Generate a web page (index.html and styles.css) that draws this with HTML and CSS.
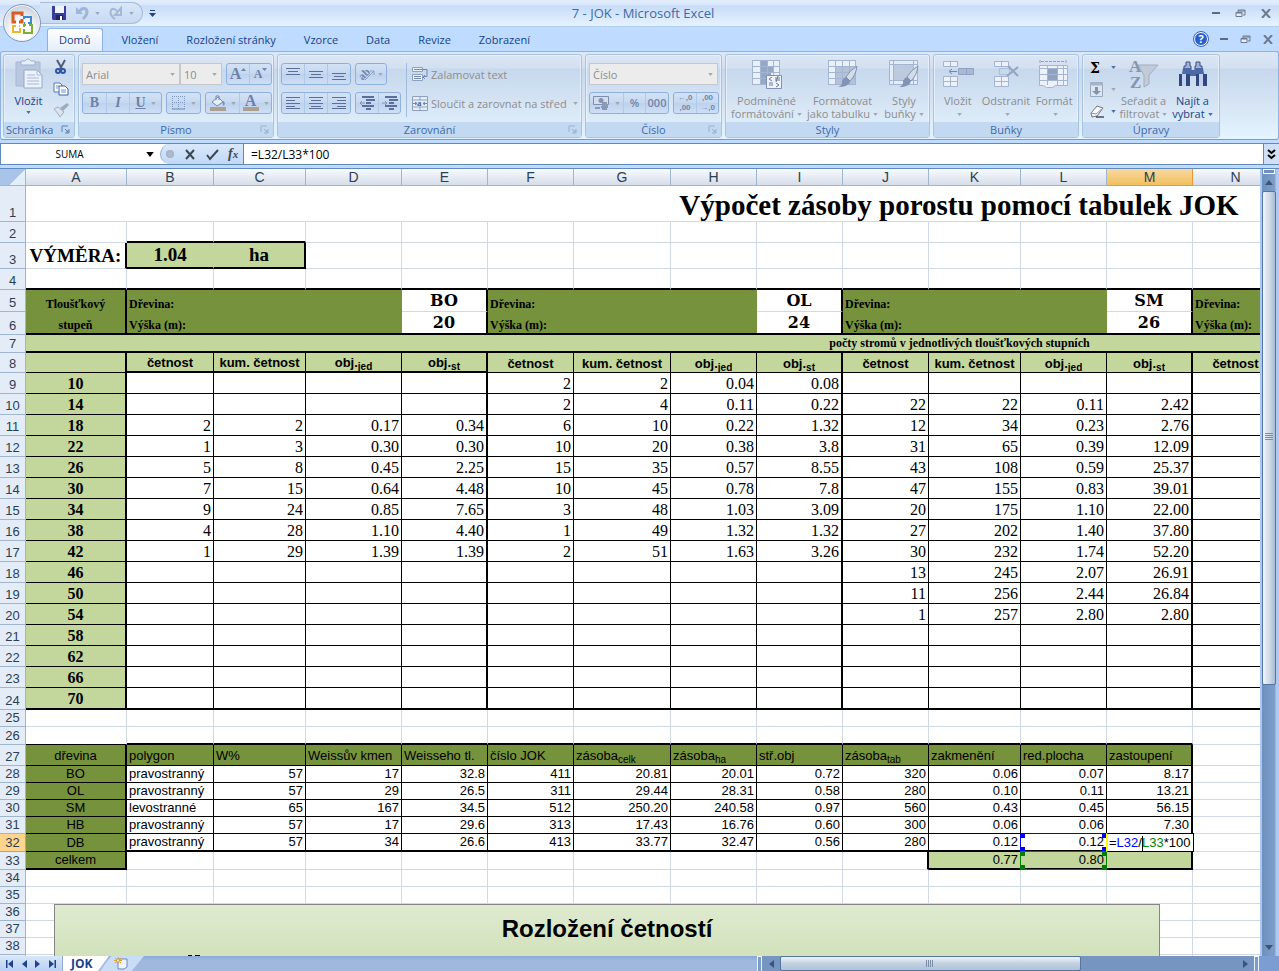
FILE: index.html
```html
<!DOCTYPE html>
<html lang="cs">
<head>
<meta charset="utf-8">
<title>7 - JOK - Microsoft Excel</title>
<link rel="stylesheet" href="styles.css">
</head>
<body>
<svg class="defs" aria-hidden="true">
  <symbol id="down" viewBox="0 0 6 4"><path d="M0 0h6L3 4z" fill="currentColor"/></symbol>
  <symbol id="launch" viewBox="0 0 9 9"><path d="M1 7V1h6M8 4v4H4M4 4l3 3M7 5v2H5" fill="none" stroke="currentColor"/></symbol>
  <symbol id="restore" viewBox="0 0 11 9"><path d="M3 3V1h7v5H8M3 2h7" fill="none" stroke="#6c7a8c"/><path d="M1 3.500h6v4H1z" fill="#e4eefc" stroke="#6c7a8c"/><path d="M1 4h6" stroke="#6c7a8c"/></symbol>
  <symbol id="close" viewBox="0 0 10 9"><path d="M1 0l8 9M9 0L1 9" stroke="#6c7a8c" stroke-width="2"/></symbol>
  <symbol id="min" viewBox="0 0 8 3"><path d="M0 1h8" stroke="#5d6b7c" stroke-width="2"/></symbol>
  <symbol id="brush" viewBox="0 0 20 22"><path d="M19 0q-7 4-11 11l4 4q6-6 7-15z" fill="#d3dce9" stroke="#7f93b4"/><path d="M8 11l4 4q-1 6-12 6 5-2 4-6 1-3 4-4z" fill="#8193b6"/></symbol>
</svg>

<header class="titlebar">
  <div class="quick">
    <button class="flat" aria-label="Uložit"><svg width="14" height="14" viewBox="0 0 14 14"><path d="M0 0h14v14H1l-1-1z" fill="#3a3c9c"/><path d="M3 0h9v7H3z" fill="#eef2fb"/><path d="M4 9h7v5H4z" fill="#20245f"/><path d="M8 10h2v4H8z" fill="#fff"/></svg></button>
    <button class="flat" aria-label="Zpět"><svg width="13" height="13" viewBox="0 0 13 13"><path d="M1 0v7h7z" fill="#9cb6dc"/><path d="M4 5q3-5 7-3 3 4-3 10" fill="none" stroke="#9cb6dc" stroke-width="3"/></svg></button>
    <svg class="arrow pale"><use href="#down"/></svg>
    <button class="flat redo" aria-label="Znovu"><svg width="13" height="13" viewBox="0 0 13 13"><path d="M12 1v7H6zM9 5Q5 0 2 3q-2 5 4 9" fill="none" stroke="#a5b9d6" stroke-width="2"/></svg></button>
    <svg class="arrow pale"><use href="#down"/></svg>
  </div>
  <button class="flat more" aria-label="Přizpůsobit"><svg width="7" height="7" viewBox="0 0 7 7"><path d="M1 0h5v1H1zM0 3h7L3.500 7z" fill="#1e4485"/></svg></button>
  <h1>7 - JOK - Microsoft Excel</h1>
  <div class="winbtns">
    <button class="flat" aria-label="Minimalizovat"><svg width="8" height="3"><use href="#min"/></svg></button>
    <button class="flat" aria-label="Obnovit"><svg width="11" height="9"><use href="#restore"/></svg></button>
    <button class="flat" aria-label="Zavřít"><svg width="10" height="9"><use href="#close"/></svg></button>
  </div>
  <button class="office" aria-label="Tlačítko Office"><svg width="24" height="24" viewBox="0 0 24 24" fill="none"><path d="M6 11H3V2h9v3M12 8v3H9" stroke="#dc5a1f" stroke-width="3"/><path d="M14 8V6h7v6h-3M15 12h-1" stroke="#3f86cf" stroke-width="2"/><path d="M10 17v4H3v-6h3M9 15h1" stroke="#f0b52a" stroke-width="2"/><path d="M14 18v4h8v-8h-3M16 14h-2v2" stroke="#7fae37" stroke-width="2"/></svg></button>
</header>

<nav class="tabs">
  <a href="#" class="on">Domů</a><a href="#">Vložení</a><a href="#">Rozložení stránky</a><a href="#">Vzorce</a><a href="#">Data</a><a href="#">Revize</a><a href="#">Zobrazení</a>
  <div class="winbtns">
    <button class="help" aria-label="Nápověda">?</button>
    <button class="flat" aria-label="Minimalizovat okno"><svg width="8" height="3"><use href="#min"/></svg></button>
    <button class="flat" aria-label="Obnovit okno"><svg width="11" height="9"><use href="#restore"/></svg></button>
    <button class="flat" aria-label="Zavřít okno"><svg width="10" height="9"><use href="#close"/></svg></button>
  </div>
</nav>

<div class="ribbon">
  <section class="group g-clip">
    <div class="body">
      <button class="big live"><svg width="28" height="32" viewBox="0 0 28 32"><path d="M1 4h24v24H1z" fill="#b9c8e0" stroke="#a7b8d3"/><path d="M6 3h4q3-4 6 0h4v4H6z" fill="#e8eef8" stroke="#9fb1cf"/><path d="M9 12h13l5 5v13H9z" fill="#edf3fc" stroke="#94a9cc"/><path d="M22 12v5h5M12 17h8M12 20h12M12 23h12M12 26h12" fill="none" stroke="#a3b7d8"/></svg><span>Vložit</span><svg class="arrow"><use href="#down"/></svg></button>
      <div class="stack">
        <button class="flat" aria-label="Vyjmout"><svg width="12" height="15" viewBox="0 0 12 15"><path d="M2 0l5 9M10 0L5 9" stroke="#4b5f80" stroke-width="2"/><circle cx="3" cy="11" r="2" fill="none" stroke="#2d56a5" stroke-width="2"/><circle cx="8" cy="11" r="2" fill="none" stroke="#2d56a5" stroke-width="2"/></svg></button>
        <button class="flat" aria-label="Kopírovat"><svg width="16" height="14" viewBox="0 0 16 14"><path d="M1 1h6l2 2v7H1z" fill="#fff" stroke="#5578b8"/><path d="M6 4h6l3 3v6H6z" fill="#fff" stroke="#3f63a8"/><path d="M8 8h5M8 10h5M3 4h3M3 6h2" stroke="#6f8fca"/></svg></button>
        <button class="flat" aria-label="Kopírovat formát"><svg width="16" height="14" viewBox="0 0 16 14"><path d="M14 0l2 2-6 6-3-3z" fill="#99abc6"/><path d="M1 6l4-2 6 5-4 5q-2-4-6-8z" fill="#dbe3ef" stroke="#a2aec2"/></svg></button>
      </div>
    </div>
    <h2>Schránka<svg class="launch dark"><use href="#launch"/></svg></h2>
  </section>

  <section class="group g-font">
    <div class="body rows">
      <div class="row">
        <div class="combos"><label class="combo font"><select aria-label="Písmo"><option>Arial</option></select><svg class="arrow gray"><use href="#down"/></svg></label><label class="combo size"><select aria-label="Velikost písma"><option>10</option></select><svg class="arrow gray"><use href="#down"/></svg></label></div>
        <div class="seg"><button class="ltr grow-a" aria-label="Zvětšit písmo">A<svg width="5" height="3" viewBox="0 0 5 3"><path d="M0 3h5L2.500 0z" fill="#7085a8"/></svg></button><button class="ltr grow-a small" aria-label="Zmenšit písmo">A<svg width="5" height="3" viewBox="0 0 5 3"><path d="M0 0h5L2.500 3z" fill="#7085a8"/></svg></button></div>
      </div>
      <div class="row">
        <div class="seg"><button class="ltr fmt">B</button><button class="ltr fmt"><i>I</i></button><button class="ltr wide"><u>U</u><svg class="arrow gray"><use href="#down"/></svg></button></div>
        <div class="seg"><button class="bord" aria-label="Ohraničení"><svg width="14" height="14" viewBox="0 0 14 14"><path d="M.5 0v13M6.500 0v13M12.500 0v13M0 .5h13M0 6.500h13" stroke="#8299bf" stroke-dasharray="1 1"/><path d="M0 13h13" stroke="#6e88b3"/></svg><svg class="arrow gray"><use href="#down"/></svg></button></div>
        <div class="seg"><button class="bord" aria-label="Barva výplně"><svg width="16" height="16" viewBox="0 0 16 16"><path d="M2 7l6-5 5 5-6 4zM6 5V1h3v4" fill="#e6edf7" stroke="#7489b1"/><path d="M13 6q3 1 1 5-2-1-1-5z" fill="#7d90b3"/><path d="M0 12h16v4H0z" fill="#ab9f8f"/></svg><svg class="arrow gray"><use href="#down"/></svg></button><button class="ltr under" aria-label="Barva písma"><b>A</b><svg class="arrow gray"><use href="#down"/></svg></button></div>
      </div>
    </div>
    <h2>Písmo<svg class="launch"><use href="#launch"/></svg></h2>
  </section>

  <section class="group g-align">
    <div class="body split">
      <div class="rows">
        <div class="row">
          <div class="seg three"><button aria-label="Nahoru"><svg width="14" height="12" viewBox="0 0 14 12"><path d="M0 .5h14M2 3.500h10M0 6.500h14" stroke="#5c6f9b"/></svg></button><button aria-label="Na střed svisle"><svg width="14" height="12" viewBox="0 0 14 12"><path d="M0 3.500h14M2 6.500h10M0 9.500h14" stroke="#5c6f9b"/></svg></button><button aria-label="Dolů"><svg width="14" height="12" viewBox="0 0 14 12"><path d="M0 5.500h14M2 8.500h10M0 11.500h14" stroke="#5c6f9b"/></svg></button></div>
          <div class="seg"><button class="orient" aria-label="Orientace"><svg width="17" height="14" viewBox="0 0 17 14"><path d="M6 13L15 4M11 4h4v4" fill="none" stroke="#8c9fc0"/><text x="0" y="11" transform="rotate(-45 5 8)">ab</text></svg><svg class="arrow gray"><use href="#down"/></svg></button></div>
        </div>
        <div class="row">
          <div class="seg three"><button aria-label="Vlevo"><svg width="14" height="12" viewBox="0 0 14 12"><path d="M0 .5h14M0 3.500h9M0 6.500h14M0 9.500h9M0 11.500h14" stroke="#5c6f9b"/></svg></button><button aria-label="Na střed"><svg width="14" height="12" viewBox="0 0 14 12"><path d="M0 .5h14M2 3.500h10M0 6.500h14M2 9.500h10M0 11.500h14" stroke="#5c6f9b"/></svg></button><button aria-label="Vpravo"><svg width="14" height="12" viewBox="0 0 14 12"><path d="M0 .5h14M5 3.500h9M0 6.500h14M5 9.500h9M0 11.500h14" stroke="#5c6f9b"/></svg></button></div>
          <div class="seg two"><button aria-label="Zmenšit odsazení"><svg width="16" height="14" viewBox="0 0 16 14"><path d="M3 1h12M7 4h9M7 7h5M3 10h12M7 13h5" stroke="#5c6f9b" stroke-width="2"/><path d="M6 7H1M3 5L1 7l2 2" fill="none" stroke="#8095b9"/></svg></button><button aria-label="Zvětšit odsazení"><svg width="16" height="14" viewBox="0 0 16 14"><path d="M3 1h12M7 4h9M7 7h5M3 10h12M7 13h5" stroke="#5c6f9b" stroke-width="2"/><path d="M0 7h5M3 5l2 2-2 2" fill="none" stroke="#8095b9"/></svg></button></div>
        </div>
      </div>
      <div class="rows texts">
        <button class="line"><svg width="16" height="15" viewBox="0 0 16 15"><path d="M.5.5h10v4H.5zM.5 7.500h10v6H.5z" fill="#eef3fa" stroke="#8da0c0"/><path d="M2 2.500h13v7h-3M2 9.500h7M2 11.500h7M13 8l-2 2 2 2" fill="none" stroke="#7187ad"/></svg>Zalamovat text</button>
        <button class="line"><svg width="16" height="15" viewBox="0 0 16 15"><path d="M.5.5h15v14H.5zM0 4h16M0 11h16M8 0v4M8 11v4" fill="#e8eef8" stroke="#8da0c0"/><path d="M1 7.500h4M3 6l2 1.500L3 9M15 7.500h-4M13 6l-2 1.500L13 9" fill="none" stroke="#7187ad"/><text x="5" y="10">a</text></svg>Sloučit a zarovnat na střed<svg class="arrow gray"><use href="#down"/></svg></button>
      </div>
    </div>
    <h2>Zarovnání<svg class="launch"><use href="#launch"/></svg></h2>
  </section>

  <section class="group g-num">
    <div class="body rows">
      <div class="row"><label class="combo grow"><select aria-label="Formát čísla"><option>Číslo</option></select><svg class="arrow gray"><use href="#down"/></svg></label></div>
      <div class="row">
        <div class="seg nums"><button class="bord" aria-label="Měna"><svg width="17" height="16" viewBox="0 0 17 16"><path d="M.5 1.500h15v8H.5z" fill="#d6dde9" stroke="#7b8eb0"/><circle cx="8" cy="5.500" r="2.500" fill="#8193b4"/><path d="M2 13h5M9 8h5M9 10h6M8 12h7M9 14h5" stroke="#8b99b3" stroke-width="2"/></svg><svg class="arrow gray"><use href="#down"/></svg></button><button>%</button><button>000</button></div>
        <div class="seg dec"><button aria-label="Přidat desetinné místo">←,0<br>,00</button><button aria-label="Odebrat desetinné místo">,00<br>→,0</button></div>
      </div>
    </div>
    <h2>Číslo<svg class="launch"><use href="#launch"/></svg></h2>
  </section>

  <section class="group g-styles">
    <div class="body">
      <button class="big"><svg width="32" height="30" viewBox="0 0 32 30"><path d="M1.500 1.500h27v24h-27z" fill="#eaf0f9"/><path d="M9 1h7v6h7v6h-3v6h-4v6H9z" fill="#95a7c7"/><path d="M1.500 1v25M9.500 1v25M16.500 1v25M22.500 1v25M28.500 1v25M1 1.500h28M1 7.500h28M1 13.500h28M1 19.500h28M1 25.500h28" stroke="#a3b5d1"/><path d="M15.500 16.500h15v13h-15z" fill="#eef2f9" stroke="#7f92b4"/><path d="M21 18l-3 2 3 2M18 24h4M18 26h4M24 19h5M24 21h5M27 17l-2 6M25 24l3 2-3 2" fill="none" stroke="#667da8"/></svg><span>Podmíněné<br>formátování<svg class="arrow gray"><use href="#down"/></svg></span></button>
      <button class="big"><svg width="32" height="30" viewBox="0 0 32 30"><path d="M1.500 1.500h27v24h-27z" fill="#eaf0f9"/><path d="M8 8h21v18H8z" fill="#b4c2d9"/><path d="M1.500 1v25M8.500 1v25M15.500 1v25M22.500 1v25M28.500 1v25M1 1.500h28M1 7.500h28M1 13.500h28M1 19.500h28M1 25.500h28" stroke="#a3b5d1"/><use href="#brush" x="11" y="7" width="20" height="22"/></svg><span>Formátovat<br>jako tabulku<svg class="arrow gray"><use href="#down"/></svg></span></button>
      <button class="big"><svg width="32" height="30" viewBox="0 0 32 30"><path d="M1.500 1.500h28v24h-28z" fill="#e4ecf7" stroke="#a3b5d1"/><path d="M5.500 5.500h20v16h-20z" fill="#bccae0" stroke="#a3b5d1"/><path d="M5.500 1v25M25.500 1v25M1 5.500h28M1 21.500h28" stroke="#a3b5d1"/><use href="#brush" x="11" y="7" width="20" height="22"/></svg><span>Styly<br>buňky<svg class="arrow gray"><use href="#down"/></svg></span></button>
    </div>
    <h2>Styly</h2>
  </section>

  <section class="group g-cells">
    <div class="body">
      <button class="big"><svg width="32" height="30" viewBox="0 0 32 30"><path d="M1.500 2.500h14v5h-14zM8.500 2v6M1.500 17.500h14v10h-14zM8.500 17v11M1 22.500h15" fill="#edf2fa" stroke="#a3b5d1"/><path d="M16.500 9.500h15v6h-15zM24.500 9v7" fill="#a9b9d3" stroke="#8ea3c4"/><path d="M15 12.500H8M10 10l-3 2.500 3 2.500" fill="none" stroke="#7289b2"/></svg><span>Vložit<br><svg class="arrow gray"><use href="#down"/></svg></span></button>
      <button class="big"><svg width="32" height="30" viewBox="0 0 32 30"><path d="M4.500 2.500h14v5h-14zM11.500 2v6M4.500 17.500h14v10h-14zM11.500 17v11M4 22.500h15" fill="#edf2fa" stroke="#a3b5d1"/><path d="M9.500 9.500h10v6h-10z" fill="none" stroke="#8ea3c4" stroke-dasharray="1 1"/><path d="M18 7l10 10M28 8L17 17" stroke="#93a4be" stroke-width="2"/></svg><span>Odstranit<br><svg class="arrow gray"><use href="#down"/></svg></span></button>
      <button class="big"><svg width="32" height="30" viewBox="0 0 32 30"><path d="M2 1v3M28 1v3M3 2.500h24" fill="none" stroke="#8ea3c4" stroke-dasharray="3 1"/><path d="M1.500 6.500h28v20h-12l-3 2h-6l-3-2h-4z" fill="#edf2fa" stroke="#a3b5d1"/><path d="M10 10h9v11h-9z" fill="#8fa1c0"/><path d="M9.500 6v20M19.500 6v20M25.500 6v20M1 9.500h28M1 15.500h28M1 21.500h28" stroke="#a3b5d1"/></svg><span>Formát<br><svg class="arrow gray"><use href="#down"/></svg></span></button>
    </div>
    <h2>Buňky</h2>
  </section>

  <section class="group g-edit">
    <div class="body">
      <div class="stack edit">
        <button class="flat"><b class="sum">Σ</b><svg class="arrow"><use href="#down"/></svg></button>
        <button class="flat" aria-label="Vyplnit"><svg width="13" height="15" viewBox="0 0 13 15"><path d="M.5.5h12v14H.5z" fill="#dde5f0" stroke="#9ba9bf"/><path d="M0 2h13" stroke="#a7b4c8" stroke-width="3"/><path d="M5 5h3v4h3l-4.500 4L2 9h3z" fill="#8494ae"/></svg><svg class="arrow gray"><use href="#down"/></svg></button>
        <button class="flat" aria-label="Vymazat"><svg width="14" height="13" viewBox="0 0 14 13"><path d="M1 8l6-7 6 2-6 8-5 1z" fill="#f7f9fd" stroke="#69788f"/><path d="M1 8l5 1 7-6" fill="none" stroke="#8a96a8"/><path d="M6 12h8" stroke="#000"/></svg><svg class="arrow"><use href="#down"/></svg></button>
      </div>
      <button class="big"><svg width="32" height="30" viewBox="0 0 32 30"><path d="M10 6h20L21 16v9l-5 3V16z" fill="#c3cbd8" stroke="#a2adbe"/><text x="1" y="13">A</text><text x="2" y="29">Z</text></svg><span>Seřadit a<br>filtrovat<svg class="arrow gray"><use href="#down"/></svg></span></button>
      <button class="big live"><svg width="30" height="30" viewBox="0 0 30 30"><path d="M8 3h4v4h1v6H6V7h2zM18 3h4v4h2v6h-7V7h1z" fill="#9fb2d8" stroke="#3a4f85"/><path d="M5 9h8v6H4zM17 9h8l1 6h-9zM12 11h6v6h-6z" fill="#4d68a8"/><path d="M1 15h11v12H1zM18 15h11v12H18z" fill="#31487f"/><path d="M4 15h4v12H4zM21 15h4v12h-4z" fill="#c1d0ee"/></svg><span>Najít a<br>vybrat<svg class="arrow"><use href="#down"/></svg></span></button>
    </div>
    <h2>Úpravy</h2>
  </section>
</div>

<div class="formula">
  <div class="namebox"><input aria-label="Pole názvů" value="SUMA"><svg class="arrow black"><use href="#down"/></svg></div>
  <div class="fx">
    <span class="knob"></span>
    <button class="flat" aria-label="Storno"><svg width="10" height="9" viewBox="0 0 10 9"><path d="M1 0l8 9M9 0L1 9" stroke="#3d4650" stroke-width="2"/></svg></button>
    <button class="flat" aria-label="Zadat"><svg width="13" height="11" viewBox="0 0 13 11"><path d="M1 6l3 4 8-9" fill="none" stroke="#3d4650" stroke-width="2"/></svg></button>
    <button class="flat fn">f<small>x</small></button>
  </div>
  <input class="bar" aria-label="Řádek vzorců" value="=L32/L33*100">
  <button class="expand" aria-label="Rozbalit"><svg width="7" height="9" viewBox="0 0 7 9"><path d="M0 0l3.500 3L7 0M0 5l3.500 3L7 5" fill="none" stroke="#000" stroke-width="2"/></svg></button>
</div>

<main class="work">
<div class="sheet">
<table>
<colgroup><col class="c-no"><col class="c-a"><col class="c-b"><col class="c-c"><col class="c-d"><col class="c-e"><col class="c-f"><col class="c-g"><col class="c-h"><col class="c-i"><col class="c-j"><col class="c-k"><col class="c-l"><col class="c-m"><col class="c-n"><col class="c-rest"></colgroup>
<thead><tr><th class="corner"><th>A<th>B<th>C<th>D<th>E<th>F<th>G<th>H<th>I<th>J<th>K<th>L<th class="sel">M<th>N<th></thead>
<tbody>
<tr class="h36"><th>1<td colspan="15" class="title">Výpočet zásoby porostu pomocí tabulek JOK
<tr class="h21"><th>2<td><td class="tb"><td class="tb"><td><td><td><td><td><td><td><td><td><td><td><td>
<tr class="h26 area"><th>3<td class="tr label">VÝMĚRA:<td class="tb val">1.04<td class="tb tr val">ha<td><td><td><td><td><td><td><td><td><td><td><td>
<tr class="h21 over"><th>4<td><td><td><td><td><td><td><td><td><td><td><td><td><td><td>
</tbody>
<tbody class="species">
<tr class="h22"><th>5<td class="tr ctr">Tloušťkový<td colspan="3">Dřevina:<td class="tr name">BO<td colspan="3">Dřevina:<td class="tr name">OL<td colspan="3">Dřevina:<td class="tr name">SM<td>Dřevina:<td>
<tr class="h23"><th>6<td class="tr ctr">stupeň<td colspan="3">Výška (m):<td class="tr name">20<td colspan="3">Výška (m):<td class="tr name">24<td colspan="3">Výška (m):<td class="tr name">26<td>Výška (m):<td>
<tr class="h18 band"><th>7<td colspan="15">počty stromů v jednotlivých tloušťkových stupních
</tbody>
<tbody class="counts">
<tr class="h20 heads"><th>8<td><td class="tb">četnost<td class="tb">kum. četnost<td class="tb">obj.<sub>jed</sub><td class="tb">obj.<sub>st</sub><td>četnost<td>kum. četnost<td>obj.<sub>jed</sub><td>obj.<sub>st</sub><td>četnost<td>kum. četnost<td>obj.<sub>jed</sub><td>obj.<sub>st</sub><td>četnost<td>
<tr><th>9<td>10<td><td><td><td><td>2<td>2<td>0.04<td>0.08<td><td><td><td><td><td>
<tr><th>10<td>14<td><td><td><td><td>2<td>4<td>0.11<td>0.22<td>22<td>22<td>0.11<td>2.42<td><td>
<tr><th>11<td>18<td>2<td>2<td>0.17<td>0.34<td>6<td>10<td>0.22<td>1.32<td>12<td>34<td>0.23<td>2.76<td><td>
<tr><th>12<td>22<td>1<td>3<td>0.30<td>0.30<td>10<td>20<td>0.38<td>3.8<td>31<td>65<td>0.39<td>12.09<td><td>
<tr><th>13<td>26<td>5<td>8<td>0.45<td>2.25<td>15<td>35<td>0.57<td>8.55<td>43<td>108<td>0.59<td>25.37<td><td>
<tr><th>14<td>30<td>7<td>15<td>0.64<td>4.48<td>10<td>45<td>0.78<td>7.8<td>47<td>155<td>0.83<td>39.01<td><td>
<tr><th>15<td>34<td>9<td>24<td>0.85<td>7.65<td>3<td>48<td>1.03<td>3.09<td>20<td>175<td>1.10<td>22.00<td><td>
<tr><th>16<td>38<td>4<td>28<td>1.10<td>4.40<td>1<td>49<td>1.32<td>1.32<td>27<td>202<td>1.40<td>37.80<td><td>
<tr><th>17<td>42<td>1<td>29<td>1.39<td>1.39<td>2<td>51<td>1.63<td>3.26<td>30<td>232<td>1.74<td>52.20<td><td>
<tr><th>18<td>46<td><td><td><td><td><td><td><td><td>13<td>245<td>2.07<td>26.91<td><td>
<tr><th>19<td>50<td><td><td><td><td><td><td><td><td>11<td>256<td>2.44<td>26.84<td><td>
<tr><th>20<td>54<td><td><td><td><td><td><td><td><td>1<td>257<td>2.80<td>2.80<td><td>
<tr><th>21<td>58<td><td><td><td><td><td><td><td><td><td><td><td><td><td>
<tr><th>22<td>62<td><td><td><td><td><td><td><td><td><td><td><td><td><td>
<tr><th>23<td>66<td><td><td><td><td><td><td><td><td><td><td><td><td><td>
<tr class="h22 over"><th>24<td>70<td><td><td><td><td><td><td><td><td><td><td><td><td><td>
</tbody>
<tbody>
<tr><th>25<td><td><td><td><td><td><td><td><td><td><td><td><td><td><td>
<tr class="h18 pre"><th>26<td><td><td><td><td><td><td><td><td><td><td><td><td><td><td>
</tbody>
<tbody class="stock">
<tr class="h21 heads"><th>27<td>dřevina<td>polygon<td>W%<td>Weissův kmen<td>Weisseho tl.<td>číslo JOK<td>zásoba<sub>celk</sub><td>zásoba<sub>ha</sub><td>stř.obj<td>zásoba<sub>tab</sub><td>zakmenění<td>red.plocha<td>zastoupení<td><td>
<tr><th>28<td>BO<td>pravostranný<td>57<td>17<td>32.8<td>411<td>20.81<td>20.01<td>0.72<td>320<td>0.06<td>0.07<td>8.17<td><td>
<tr><th>29<td>OL<td>pravostranný<td>57<td>29<td>26.5<td>311<td>29.44<td>28.31<td>0.58<td>280<td>0.10<td>0.11<td>13.21<td><td>
<tr><th>30<td>SM<td>levostranné<td>65<td>167<td>34.5<td>512<td>250.20<td>240.58<td>0.97<td>560<td>0.43<td>0.45<td>56.15<td><td>
<tr><th>31<td>HB<td>pravostranný<td>57<td>17<td>29.6<td>313<td>17.43<td>16.76<td>0.60<td>300<td>0.06<td>0.06<td>7.30<td><td>
<tr class="h18 last"><th class="sel">32<td>DB<td>pravostranný<td>57<td>34<td>26.6<td>413<td>33.77<td>32.47<td>0.56<td>280<td>0.12<td>0.12<span class="range blue"><i></i><i></i><i></i><i></i></span><td><span class="editing">=<b>L32</b>/<span class="caret"></span><em>L33</em>*100</span><td><td>
</tbody>
<tbody class="total">
<tr class="h18"><th>33<td>celkem<td><td><td><td><td><td><td><td><td><td>0.77<td>0.80<span class="range green"><i></i><i></i><i></i><i></i></span><td><td><td>
</tbody>
<tbody>
<tr><th>34<td><td><td><td><td><td><td><td><td><td><td><td><td><td><td>
<tr><th>35<td><td><td><td><td><td><td><td><td><td><td><td><td><td><td>
<tr><th>36<td class="anchor"><section class="chart"><h3>Rozložení četností</h3><svg width="12" height="4" viewBox="0 0 12 4"><path d="M0 1h4M7 1h5" stroke="#000" stroke-width="2"/></svg></section><td><td><td><td><td><td><td><td><td><td><td><td><td><td>
<tr><th>37<td><td><td><td><td><td><td><td><td><td><td><td><td><td><td>
<tr><th>38<td><td><td><td><td><td><td><td><td><td><td><td><td><td><td>
<tr><th>39<td><td><td><td><td><td><td><td><td><td><td><td><td><td><td>
</tbody>
</table>
</div>
<div class="vscroll"><span class="splitbox"></span><button class="flat" aria-label="Posunout nahoru"><svg width="8" height="5" viewBox="0 0 8 5"><path d="M0 5h8L4 0z" fill="#3c5479"/></svg></button><div class="track"><div class="thumb"><svg width="8" height="9" viewBox="0 0 8 9"><path d="M0 .5h8M0 2.500h8M0 4.500h8M0 6.500h8" stroke="#7d8fa8"/></svg></div></div><button class="flat" aria-label="Posunout dolů"><svg width="8" height="5" viewBox="0 0 8 5"><path d="M0 0h8L4 5z" fill="#3c5479"/></svg></button></div>
</main>

<footer class="bottom">
  <div class="steps">
    <button class="flat" aria-label="První list"><svg width="7" height="8" viewBox="0 0 7 8"><path d="M0 0h1.500v8H0zM7 0v8L2 4z" fill="#1c438c"/></svg></button>
    <button class="flat" aria-label="Předchozí list"><svg width="5" height="8" viewBox="0 0 5 8"><path d="M5 0v8L0 4z" fill="#1c438c"/></svg></button>
    <button class="flat" aria-label="Další list"><svg width="5" height="8" viewBox="0 0 5 8"><path d="M0 0v8l5-4z" fill="#1c438c"/></svg></button>
    <button class="flat" aria-label="Poslední list"><svg width="7" height="8" viewBox="0 0 7 8"><path d="M5.500 0H7v8H5.500zM0 0v8l5-4z" fill="#1c438c"/></svg></button>
  </div>
  <button class="tab">JOK</button>
  <button class="tab add" aria-label="Vložit list"><svg width="16" height="13" viewBox="0 0 16 13"><path d="M4 2h9v8l-3 2H4z" fill="#eef4fd" stroke="#6c88b4"/><path d="M4 0v7M0 3.500h8M1 1l6 5M7 1L1 6" stroke="#e39a26"/><circle cx="4" cy="3.500" r="1" fill="#fff6c8"/></svg></button>
  <span class="space"></span>
  <span class="grip"></span>
  <div class="hscroll"><button class="flat" aria-label="Posunout doleva"><svg width="5" height="8" viewBox="0 0 5 8"><path d="M5 0v8L0 4z" fill="#3c5479"/></svg></button><div class="track"><div class="thumb"><svg width="8" height="7" viewBox="0 0 8 7"><path d="M.5 0v7M2.500 0v7M4.500 0v7M6.500 0v7" stroke="#7d8fa8"/></svg></div></div><button class="flat" aria-label="Posunout doprava"><svg width="5" height="8" viewBox="0 0 5 8"><path d="M0 0v8l5-4z" fill="#3c5479"/></svg></button></div>
  <span class="grip"></span>
  <span class="end"></span>
</footer>
</body>
</html>
```
FILE: styles.css
```css
* { box-sizing: border-box; }

body {
  margin: 0;
  height: 100vh;
  display: flex;
  flex-direction: column;
  overflow: hidden;
  background: #bfdbff;
  font: 11px "Open Sans", "Noto Sans", sans-serif;
  color: #15428b;
}

button, input, select { font: inherit; color: inherit; margin: 0; padding: 0; border: 0; background: none; }
h1, h2, h3 { margin: 0; font-weight: normal; }
.defs { position: absolute; width: 0; height: 0; }
svg { flex: none; display: block; overflow: visible; }
.flat { display: flex; align-items: center; justify-content: center; }

.arrow { width: 5px; height: 3px; color: #4371b0; }
.arrow.gray { color: #a3a7ad; }
.arrow.pale { color: #93a9c9; }
.arrow.black { width: 8px; height: 5px; color: #000; }

/* title bar */
.titlebar {
  position: relative;
  height: 27px;
  flex: none;
  display: flex;
  align-items: center;
  padding-left: 40px;
  background: linear-gradient(#e4eefb 0, #d9e8fb 18%, #c7dcf8 22%, #d7e7fb 60%, #e6f2ff);
  border-bottom: 1px solid #b0cfee;
}
.quick {
  display: flex;
  align-items: center;
  gap: 9px;
  width: 103px;
  height: 22px;
  padding-left: 12px;
  border: 1px solid #a4bde0;
  border-left: 0;
  border-radius: 0 11px 11px 0;
  background: linear-gradient(#d8e6f8, #c8daf3);
}
.quick .arrow { margin-left: -2px; }
.more { width: 7px; margin-left: 6px; }
.titlebar h1 { flex: 1; font-size: 13px; line-height: 26px; text-align: center; color: #3e6aaa; padding-right: 82px; }
.winbtns { display: flex; align-items: center; gap: 15px; margin-left: auto; padding-right: 8px; }
.office {
  position: absolute;
  z-index: 2;
  left: 3px;
  top: 4px;
  width: 38px;
  height: 38px;
  display: grid;
  place-items: center;
  border: 1px solid #8397b3;
  border-radius: 50%;
  background: radial-gradient(circle at 50% 70%, #fff 30%, #dde2ea 60%, #b5c0d1);
  box-shadow: inset 0 0 0 1px #f5f8fc;
}

/* ribbon tabs */
.tabs { height: 24px; flex: none; display: flex; align-items: center; padding-left: 47px; line-height: 22px; }
.tabs a { color: #15428b; text-decoration: none; padding: 2px 14px 0; }
.tabs .on {
  height: 23px;
  padding: 0 11px;
  margin-right: 5px;
  align-self: flex-end;
  border: 1px solid #8db2e3;
  border-bottom: 0;
  border-radius: 3px 3px 0 0;
  background: linear-gradient(#fff, #e3eefb);
}
.tabs .winbtns { gap: 12px; padding-right: 6px; }
.help {
  width: 14px;
  height: 14px;
  border: 1px solid #fff;
  outline: 1px solid #3a66bd;
  border-radius: 50%;
  background: #2a5fcb;
  color: #fff;
  font-weight: bold;
  line-height: 12px;
}

/* ribbon */
.ribbon {
  flex: none;
  display: flex;
  gap: 3px;
  height: 89px;
  padding: 2px 3px 2px 2px;
  border: 1px solid #8db2e3;
  border-bottom-color: #6f9dd9;
  border-radius: 3px;
  background: linear-gradient(#dde8f5 0, #d3e0f0 18%, #c7d8ed 20%, #d8e6f5 65%, #e4f5ff);
}
.group {
  display: flex;
  flex-direction: column;
  flex: none;
  height: 84px;
  border: 1px solid #a9c4e2;
  border-radius: 3px;
  box-shadow: inset 0 0 0 1px rgb(240 247 255 / 60%);
}
.g-clip { width: 72px; }
.g-font { width: 196px; }
.g-align { width: 305px; }
.g-num { width: 137px; }
.g-styles { width: 205px; }
.g-cells { width: 146px; }
.g-edit { width: 138px; }
.group h2 {
  position: relative;
  display: flex;
  align-items: center;
  justify-content: center;
  height: 15px;
  flex: none;
  background: #c2d9f1;
  color: #3e6aaa;
  font-size: 11px;
  line-height: 15px;
}
.g-clip h2 { justify-content: flex-start; padding-left: 2px; }
.launch { position: absolute; right: 4px; top: 3px; width: 9px; height: 9px; color: #9ab0cd; }
.launch.dark { color: #5f83b5; }
.body { flex: 1; display: flex; min-width: 0; color: #8d8d8d; }
.body.rows, .rows { display: flex; flex-direction: column; gap: 7px; }
.body.rows { padding: 8px 3px 0; }
.row { display: flex; gap: 4px; height: 22px; }
.split { padding: 8px 3px 0; }
.split .seg { flex: none; }
.texts { margin-left: 5px; padding-left: 5px; border-left: 1px solid #9ebbe0; height: 54px; }

.big { flex: 1; display: flex; flex-direction: column; align-items: center; padding-top: 4px; line-height: 13px; }
.big > span { margin-top: 5px; white-space: nowrap; }
.big span .arrow { display: inline-block; margin: 0 0 2px 3px; }
.big svg text { font: bold 17px "Liberation Serif", serif; fill: #8595b3; }
.live { color: #15428b; }
.g-clip .big { flex: none; width: 49px; padding-top: 3px; }
.g-clip .big > span { margin: 4px 0 4px; }
.stack { display: flex; flex-direction: column; align-items: center; gap: 7px; padding-top: 5px; }
.edit { width: 36px; padding-left: 4px; }
.edit .flat { width: 26px; height: 15px; justify-content: space-between; }
.sum { color: #000; font: bold 14px "DejaVu Serif", serif; }
.g-styles .body { padding-left: 1px; }
.g-styles .big { flex: none; width: 50px; }
.g-styles .big:nth-child(1) { width: 79px; }
.g-styles .big:nth-child(2) { width: 73px; }
.g-edit .big { flex: none; width: 49px; }

.combos { display: flex; }
.combo { position: relative; display: block; height: 22px; border: 1px solid #c3c8cf; background: #ececec; }
.combo select { display: block; width: 100%; height: 20px; padding-left: 3px; appearance: none; color: #8d8d8d; }
.combo .arrow { position: absolute; right: 4px; top: 9px; }
.combo.font { width: 98px; }
.combo.size { width: 42px; }
.combo.grow { flex: 1; }

.seg { display: flex; border: 1px solid #8fb0dd; border-radius: 3px; background: linear-gradient(#d3e2f5, #c5d8f0 50%, #bed2ee 52%, #cddff4); }
.seg button { display: flex; align-items: center; justify-content: center; gap: 5px; width: 22px; min-width: 0; color: #7085a8; line-height: 10px; }
.seg button + button { border-left: 1px solid #b1c9e8; }
.seg .ltr { font: bold 14px "Liberation Serif", serif; color: #6d81a8; }
.seg .grow-a { gap: 0; font-size: 16px; }
.grow-a svg { align-self: flex-start; margin-top: 4px; }
.seg .grow-a.small { font-size: 12px; }
.seg .fmt { width: 23px; }
.seg .wide { width: 32px; }
.seg .bord { flex: none; width: 33px; }
.seg .under { width: 32px; }
.under b { border-bottom: 4px solid #ab9f8f; line-height: 12px; width: 16px; font-size: 16px; }
.three button { width: 23px; }
.three button:first-child { width: 22px; }
.two button { width: 22px; }
.seg .orient { width: 30px; gap: 2px; }
.orient text { font: bold 11px "Liberation Serif", serif; fill: #7085a8; }
.line { display: flex; align-items: center; gap: 3px; height: 22px; white-space: nowrap; color: #8d8d8d; }
.line text { font: bold 9px "Liberation Serif", serif; fill: #4d6390; }
.line .arrow { margin-left: 3px; }
.nums { font-weight: 600; }
.nums button:last-child { width: 23px; }
.seg.dec button { font-family: "Liberation Sans", Arial, sans-serif; font-size: 8px; font-weight: bold; }

/* formula bar */
.formula {
  flex: none;
  display: flex;
  height: 22px;
  margin-top: 3px;
  margin-bottom: 3px;
  border: 1px solid #6089bd;
  border-right: 0;
  background: #fff;
  color: #000;
}
.namebox { display: flex; align-items: center; width: 159px; padding-right: 6px; }
.namebox input { flex: 1; min-width: 0; text-align: center; padding-right: 8px; font-size: 10px; }
.fx {
  display: flex;
  align-items: center;
  gap: 11px;
  width: 84px;
  padding-left: 5px;
  border-right: 1px solid #6089bd;
  border-left: 1px solid #8fa9c9;
  border-radius: 10px 0 0 10px;
  background: linear-gradient(#d9e8fb, #c0d8f6);
}
.knob { width: 8px; height: 8px; border-radius: 50%; background: radial-gradient(#b4bfce, #9eabbd); }
.fn { font: italic bold 14px "Liberation Serif", serif; color: #3d4650; margin-left: -2px; }
.fn small { font-size: 11px; }
.bar { flex: 1; min-width: 0; padding-left: 7px; font-size: 12px; }
.expand { display: grid; place-items: center; width: 16px; border-left: 1px solid #6089bd; background: #cfe0f6; }

/* sheet */
.work { flex: 1; display: flex; min-height: 0; border-top: 1px solid #6089bd; }
.sheet { flex: 1; min-width: 0; overflow: hidden; background: #fff; color: #000; }
table { table-layout: fixed; width: 1893px; border-collapse: separate; border-spacing: 0; font: 13px "Liberation Sans", Arial, sans-serif; }
.c-no { width: 26px; }
.c-a { width: 101px; }
.c-b, .c-e, .c-f, .c-h, .c-i, .c-j, .c-l, .c-m, .c-n { width: 86px; }
.c-b { width: 87px; }
.c-c, .c-k { width: 92px; }
.c-d { width: 96px; }
.c-g { width: 97px; }
tr { height: 17px; }
.h18 { height: 18px; }
.h20 { height: 20px; }
.h21, .counts tr { height: 21px; }
.h22, .counts .h22 { height: 22px; }
.h23 { height: 23px; }
.h26 { height: 26px; }
.h36 { height: 36px; }
.counts .heads { height: 20px; }
th, td { padding: 0 2px; line-height: 16px; vertical-align: bottom; white-space: nowrap; border: 0 solid #d0d7e5; border-width: 0 1px 1px 0; }
th { padding: 0; border-color: #9eb6ce; background: #e4ecf7; color: #2b3f52; font-weight: normal; text-align: center; }
thead th { background: linear-gradient(#f8fbfd, #d5dde9); font-size: 14px; }
thead .corner { background: linear-gradient(135deg, #a9c4e9 62%, #e3eefb 63%); }
thead .sel { background: linear-gradient(#f9d9a0, #f1c15f); border-color: #f29536; }
tbody .sel { background: #ffd58d; border-color: #f29536; }
sub { font-size: 10px; line-height: 0; vertical-align: -3px; }
.tb { border-bottom: 2px solid #000; }
.tr { border-right: 2px solid #000; }

.title { font: bold 29px "Liberation Serif", serif; line-height: 32px; text-align: center; padding: 0; }
.area td { font: bold 19px "Liberation Serif", serif; line-height: 20px; vertical-align: middle; }
.area .label { text-align: center; padding: 0; }
.area .val { text-align: center; background: #c3d69b; }
.area .val:not(.tr) { border-right-color: #c3d69b; }
.over td { border-bottom: 2px solid #000; }

.species td { background: #76923c; border-width: 0; font: bold 12px "Liberation Serif", serif; line-height: 16px; }
.species td.tr { border-right: 2px solid #000; }
.species .ctr { text-align: center; }
.species .h23 td { border-bottom: 2px solid #000; line-height: 15px; }
.species td.name, .species .h23 td.name { background: #fff; font: bold 16px "DejaVu Serif", serif; line-height: 20px; text-align: center; }
.species .h22 .name { border-bottom: 1px solid #d0d7e5; }
.species .band td { background: #c3d69b; border-bottom: 2px solid #000; text-align: center; padding: 0; }

.counts td { border-color: #000; text-align: right; font: 16px "Liberation Serif", serif; line-height: 18px; }
.counts td:nth-child(2) { background: #c3d69b; text-align: center; font-weight: bold; }
.counts td:nth-child(4n + 2) { border-right-width: 2px; }
.counts .heads td { background: #c3d69b; text-align: center; font: bold 13px "Liberation Sans", Arial, sans-serif; line-height: 17px; padding: 0; }

.pre td:nth-child(n + 3):nth-child(-n + 14) { border-bottom: 2px solid #000; }
.pre td:nth-child(2) { border-bottom-color: #000; }
.stock td { text-align: right; }
.stock td:nth-child(-n + 14) { border-color: #000; }
.stock td:nth-child(2), .total td:nth-child(2) { background: #76923c; text-align: center; border-right: 2px solid #000; }
.stock td:nth-child(3) { text-align: left; }
.stock td:nth-child(14) { border-right-width: 2px; }
.stock .heads td:nth-child(-n + 14) { background: #76923c; line-height: 19px; }
.stock .heads td:nth-child(n + 3) { text-align: left; }
.stock .last td:nth-child(n + 3):nth-child(-n + 14) { border-bottom-width: 2px; }
.last td, .total td { position: relative; }
.total td { text-align: right; }
.total td:nth-child(2) { border-bottom: 2px solid #000; }
.total td:nth-child(11) { border-right: 2px solid #000; }
.total td:nth-child(n + 12):nth-child(-n + 14) { background: #c3d69b; border-color: #000; border-bottom-width: 2px; }
.total td:nth-child(14) { border-right-width: 2px; }

.range { position: absolute; z-index: 1; inset: -1px -1px -2px -1px; border: 1px solid; }
.range i { position: absolute; width: 5px; height: 5px; background: currentColor; }
.range i:nth-child(1) { left: -1px; top: -1px; }
.range i:nth-child(2) { right: -1px; top: -1px; }
.range i:nth-child(3) { left: -1px; bottom: -1px; }
.range i:nth-child(4) { right: -1px; bottom: -1px; }
.blue { color: #00f; }
.green { color: #008000; }
.editing { position: absolute; z-index: 2; inset: -1px -3px -2px -1px; padding-left: 1px; border: 1px solid #000; border-left: 2px solid #ff0; background: #fff; text-align: left; line-height: 18px; }
.editing b { color: #00f; font-weight: normal; }
.editing em { color: #008000; font-style: normal; }
.caret { display: inline-block; width: 1px; height: 16px; margin-right: -1px; background: #000; vertical-align: middle; }

.anchor { position: relative; }
.chart { position: absolute; z-index: 3; left: 28px; top: 0; width: 1106px; height: 300px; border: 1px solid #868686; background: linear-gradient(#dfead0, #cfe0b7 60px, #a9c97f); }
.chart h3 { font-size: 24px; font-weight: bold; line-height: 48px; text-align: center; }
.chart svg { margin: 2px 0 0 133px; }

/* scroll bars */
.vscroll { width: 19px; flex: none; display: flex; flex-direction: column; align-items: center; padding-right: 3px; border-left: 2px solid #a9c8f3; background: linear-gradient(90deg, #6d90bd, #7f9fca 13px, #b0c9f0 14px); }
.vscroll .splitbox { width: 12px; height: 5px; border: 1px solid #fff; background: #6d90bd; }
.vscroll .flat { height: 17px; width: 14px; }
.vscroll .track { flex: 1; width: 14px; }
.vscroll .thumb { height: 66%; display: grid; place-items: center; border: 1px solid #54759f; border-radius: 2px; background: linear-gradient(90deg, #f0f5fb, #c9d6e5 60%, #a9bcd3); }

.bottom { flex: none; display: flex; height: 15px; background: linear-gradient(#87aad9, #a0b8dd 30%); overflow: hidden; }
.steps { display: flex; align-items: center; justify-content: space-between; width: 63px; padding: 0 6px; border-right: 1px solid #8fa9cc; background: linear-gradient(#d7e6fa, #b9d1f3); }
.tab { width: 46px; padding-left: 8px; background: #fff; color: #15428b; font-size: 12px; font-weight: bold; line-height: 15px; text-align: left; clip-path: polygon(0 0, 100% 0, 76% 100%, 0 100%); }
.tab.add { display: grid; place-items: center; padding: 0; background: #c9ddf8; margin-left: -9px; width: 44px; clip-path: polygon(25% 0, 100% 0, 72% 100%, 0 100%); }
.space { flex: 1; }
.grip { width: 5px; border: 1px solid #eef5ff; border-bottom: 0; background: #7c9cc8; }
.hscroll { display: flex; width: 492px; background: #7696c1; }
.hscroll .flat { width: 18px; }
.hscroll .track { flex: 1; }
.hscroll .thumb { width: 66%; height: 15px; display: grid; place-items: center; border: 1px solid #54759f; border-radius: 2px; background: linear-gradient(#eef3f9, #c3d1e1 50%, #b0c2d8); }
.end { width: 20px; background: #7b9dd2; }
```
